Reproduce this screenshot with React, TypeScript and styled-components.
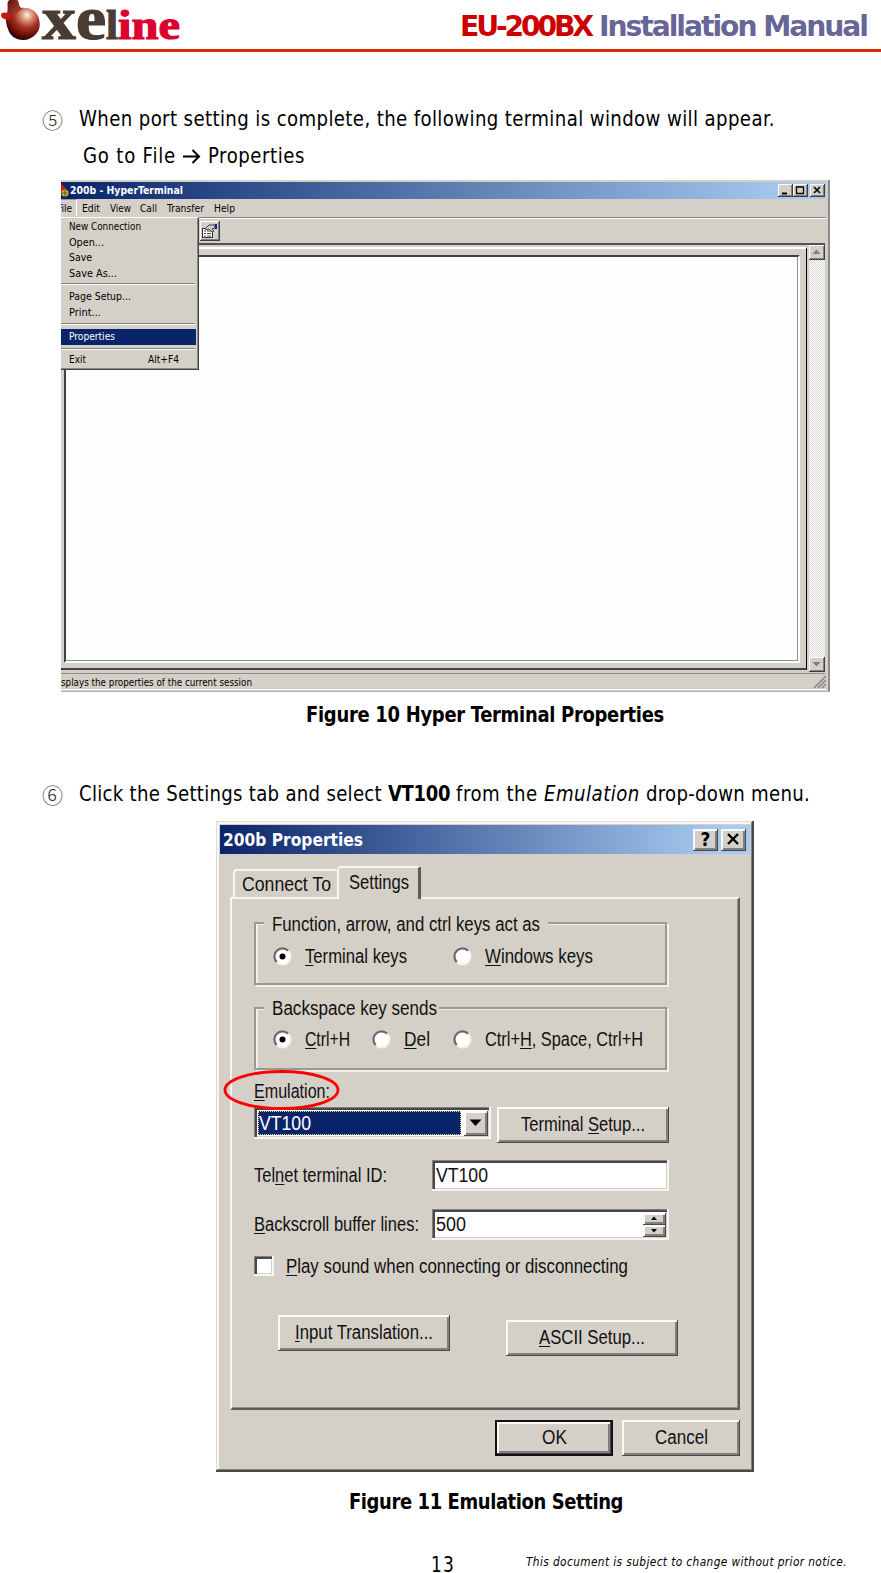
import { useLayoutEffect, useRef } from "react";
import type { ReactNode } from "react";
import styled, { createGlobalStyle, css } from "styled-components";

const face = "#d4d0c8";
const navy = "#0a246a";
const docFont = `"DejaVu Sans Condensed", "DejaVu Sans", sans-serif`;
const uiFont = `"Liberation Sans", Arial, sans-serif`;

const GlobalStyle = createGlobalStyle`
  * { box-sizing: border-box; }
  body { margin: 0; background: #fff; }
`;

/* ---------- text fitted to a line width ---------- */

const FitBox = styled.span<{ $w: number }>`
  display: inline-block;
  width: ${p => p.$w}px;
  white-space: nowrap;
  vertical-align: baseline;
`;

const FitInner = styled.span`
  display: inline-block;
  transform-origin: 0 50%;
`;

// With `squeeze` the glyphs get that width factor and tracking fills the rest,
// without it the glyphs alone are stretched to the width.
const Fit = ({ w, squeeze, children }: { w: number; squeeze?: number; children: ReactNode }) => {
  const ref = useRef<HTMLSpanElement>(null);

  useLayoutEffect(() => {
    const el = ref.current;
    if (!el) return;
    el.style.letterSpacing = "0px";
    el.style.transform = "none";
    const natural = el.getBoundingClientRect().width;
    const count = el.textContent?.length || 1;
    if (squeeze) {
      el.style.letterSpacing = `${(w / squeeze - natural) / count}px`;
      el.style.transform = `scaleX(${squeeze})`;
    } else {
      el.style.transform = `scaleX(${w / natural})`;
    }
  }, [w, squeeze]);

  return (
    <FitBox $w={w}>
      <FitInner ref={ref}>{children}</FitInner>
    </FitBox>
  );
};

/* ---------- document ---------- */

const Page = styled.div`
  width: 881px;
  height: 1573px;
  overflow: hidden;
  background: #fff;
  color: #000;
  font: 21px/37px ${docFont};
`;

const Header = styled.header`
  display: flex;
  justify-content: space-between;
  height: 52px;
  border-bottom: 3px solid #d92b04;
`;

const Logo = styled.div`
  display: flex;
  align-items: flex-start;
`;

const LogoText = styled.div`
  display: flex;
  align-items: baseline;
  height: 49px;
  font-family: "Liberation Serif", serif;
  font-weight: bold;
  line-height: 38px;
  color: #483c34;
`;

const LogoBig = styled.span`
  font-size: 61px;
  -webkit-text-stroke: 1.2px #483c34;
`;

const LogoSmall = styled.span<{ $red?: boolean }>`
  font-size: 43px;
  color: ${p => (p.$red ? "#dc0030" : "#483c34")};
  -webkit-text-stroke: 1.2px ${p => (p.$red ? "#dc0030" : "#483c34")};
`;

const Title = styled.h1`
  display: flex;
  gap: 8px;
  margin: 0;
  padding: 0 14px 0 0;
  font: bold 28.8px/52px "DejaVu Sans", sans-serif;
  color: #666699;
`;

const Product = styled.span`
  color: #cc0000;
`;

const Step = styled.div<{ $top: number }>`
  display: flex;
  height: 37px;
  margin: ${p => p.$top}px 0 0 42px;
`;

const StepNumber = styled.span`
  width: 37px;
  font: 300 21px/36px "Noto Sans CJK KR", sans-serif;
  color: #333;
`;

const SubStep = styled.div`
  display: flex;
  align-items: center;
  height: 37px;
  margin: 0 0 5px 83px;
`;

const Caption = styled.div<{ $top: number; $left: number }>`
  height: 37px;
  margin: ${p => p.$top}px 0 0 ${p => p.$left}px;
  font-weight: bold;
`;

const Footer = styled.footer`
  display: flex;
  align-items: flex-start;
  height: 27px;
  margin-top: 26px;
  padding-left: 431px;
`;

const Notice = styled.span`
  margin-left: 71px;
  font-size: 12px;
  line-height: 31px;
  font-style: italic;
`;

/* ---------- shared window parts ---------- */

const raised = css`
  background: ${face};
  box-shadow: inset -1px -1px #404040, inset 1px 1px #fff, inset -2px -2px #808080;
`;

const raisedThick = css`
  background: ${face};
  box-shadow: inset -1px -1px #484848, inset 2px 2px #fbfaf8, inset -3px -3px #808080;
`;

const sunken = css`
  background: #fff;
  box-shadow: inset -2px -2px #f6f5f2, inset 1px 1px #808080, inset 3px 3px #484848, inset -3px -3px ${face};
`;

/* ---------- HyperTerminal window ---------- */

const Terminal = styled.div`
  position: relative;
  width: 769px;
  height: 512px;
  margin-left: 61px;
  padding: 2px 2px 0 0;
  overflow: hidden;
  background: ${face};
  border-right: 2px solid #8c8c8c;
  border-bottom: 1px solid #b4b2ae;
  font: 11px/16px ${docFont};
`;

const TermTitle = styled.div`
  display: flex;
  align-items: center;
  height: 17px;
  padding: 0 1px 0 0;
  background: linear-gradient(90deg, ${navy} 0%, #a6caf0 96%);
  color: #fff;
  font-weight: bold;
`;

const TermName = styled.div`
  flex: 1;
  padding-left: 1px;
  line-height: 15px;
`;

const TermButton = styled.div<{ $gap?: boolean }>`
  ${raised}
  width: 15px;
  height: 13px;
  margin-left: ${p => (p.$gap ? 2 : 0)}px;

  svg { display: block; }
`;

const MenuBar = styled.div`
  display: flex;
  height: 19px;
  line-height: 19px;
  border-bottom: 1px solid #808080;
`;

const FileMenu = styled.div`
  display: flex;
  justify-content: flex-end;
  width: 16px;
  height: 17px;
  margin-right: 5px;
  padding-right: 4px;
  overflow: hidden;
  line-height: 18px;
  border-right: 1px solid #fff;
  border-top: 1px solid #9a9790;
`;

const MenuName = styled.div<{ $w: number }>`
  width: ${p => p.$w}px;
`;

const Toolbar = styled.div`
  height: 25px;
  padding: 2px 0 0 139px;
  border-top: 1px solid #fff;
`;

const ToolButton = styled.div`
  ${raised}
  width: 20px;
  height: 20px;
`;

const Work = styled.div`
  display: flex;
  height: 431px;
  border-top: 2px solid #55514f;
  border-bottom: 1px solid #8a8a86;
  margin-right: 1px;
`;

const Frame = styled.div`
  width: 746px;
  height: 423px;
  margin: 2px 2px 0 0;
  padding: 6px 6px 5px 3px;
  border-top: 2px solid #fff;
  border-right: 1px solid #000;
  border-bottom: 2px solid #404040;
`;

const Screen = styled.div`
  height: 100%;
  background: #fdfdfd;
  border: 2px solid #fff;
  border-top-color: #404040;
  border-left-color: #404040;
  box-shadow: inset -1px -1px #909090;
`;

const ScrollBar = styled.div`
  display: flex;
  flex-direction: column;
  justify-content: space-between;
  width: 16px;
  height: 427px;
  background: repeating-conic-gradient(#fff 0 25%, #dcd9d2 0 50%) 0 0 / 2px 2px;
`;

const ScrollButton = styled.div`
  ${raised}
  height: 15px;

  svg { display: block; }
`;

const Status = styled.div`
  display: flex;
  justify-content: space-between;
  height: 16px;
  line-height: 17px;
  border-bottom: 1px solid #fff;
`;

// The open File menu hangs over the toolbar and the screen.
const Popup = styled.div`
  position: absolute;
  left: 0;
  top: 37px;
  width: 138px;
  height: 153px;
  padding: 1px 2px 0 0;
  background: ${face};
  border-top: 1px solid #fff;
  border-right: 1px solid #404040;
  border-bottom: 1px solid #404040;
  box-shadow: inset -1px -1px #8c8a86;
`;

const PopupItem = styled.div<{ $active?: boolean }>`
  display: flex;
  height: ${p => (p.$active ? 16 : 15.5)}px;
  padding-left: 8px;
  line-height: 15px;
  background: ${p => (p.$active ? navy : "transparent")};
  color: ${p => (p.$active ? "#fff" : "#000")};
`;

const Shortcut = styled.span`
  margin-left: 62px;
`;

const PopupLine = styled.div<{ $above: number; $below: number }>`
  height: 2px;
  margin: ${p => p.$above}px 1px ${p => p.$below}px 0;
  background: #fff;
  border-top: 1px solid #808080;
`;

/* ---------- Properties dialog ---------- */

const Dialog = styled.div`
  width: 538px;
  height: 651px;
  margin: 8px 0 0 216px;
  padding: 4px;
  background: ${face};
  box-shadow: inset -2px -2px #484848, inset 1px 1px #dedbd4, inset -3px -3px #808080, inset 3px 3px #f8f7f4;
  font: 19.5px/24px ${uiFont};
  color: #111;

  u {
    text-decoration-thickness: 1.3px;
    text-underline-offset: 2px;
    text-decoration-skip-ink: none;
  }
`;

const DialogTitle = styled.div`
  display: flex;
  height: 29px;
  padding: 4px 4px 0 3px;
  background: linear-gradient(90deg, ${navy} 0%, #a6caf0 94%);
  color: #fff;
  font: bold 17px/22px ${docFont};
`;

const DialogName = styled.div`
  flex: 1;
`;

const DialogButton = styled.div`
  ${raisedThick}
  width: 25px;
  height: 22px;
  margin-left: 3px;
  color: #000;
  font: bold 19px/21px ${docFont};
  text-align: center;

  svg { display: block; }
`;

const Tabs = styled.div`
  display: flex;
  align-items: flex-end;
  height: 43px;
  padding-left: 13px;
`;

const Tab = styled.div<{ $active?: boolean }>`
  width: ${p => (p.$active ? 84 : 104)}px;
  height: ${p => (p.$active ? 33 : 28)}px;
  margin-bottom: ${p => (p.$active ? -2 : 0)}px;
  padding-left: ${p => (p.$active ? 10 : 7)}px;
  position: relative;
  background: ${face};
  border: 2px solid #f6f5f2;
  border-bottom: 0;
  border-right: ${p => (p.$active ? "3px solid #5c5c5a" : "0")};
  border-radius: 4px 3px 0 0;
  line-height: ${p => (p.$active ? 28 : 27)}px;
`;

const Panel = styled.div`
  width: 510px;
  height: 513px;
  margin-left: 10px;
  padding: 23px 0 0 22px;
  border: 2px solid #f6f5f2;
  border-right: 2px solid #5c5c5a;
  border-bottom: 2px solid #5c5c5a;
  box-shadow: inset -1px -1px #909090;
`;

const Group = styled.div<{ $shift: number }>`
  position: relative;
  display: flex;
  align-items: center;
  width: 413px;
  height: 63px;
  padding: ${p => p.$shift}px 0 0 17px;
  border: 2px solid #999895;
  box-shadow: inset 2px 1px #f2f0ec, 2px 2px #f2f0ec;

  & + & {
    margin-top: 22px;
  }
`;

// Sits on the group's top border and hides it.
const Legend = styled.div<{ $w: number; $top: number }>`
  position: absolute;
  left: 8px;
  top: ${p => p.$top}px;
  width: ${p => p.$w}px;
  padding-left: 8px;
  background: ${face};
`;

const Option = styled.label<{ $w?: number }>`
  display: flex;
  align-items: center;
  gap: 13px;
  width: ${p => (p.$w ? `${p.$w}px` : "auto")};
`;

const Row = styled.div<{ $top: number; $gap?: number; $indent?: number }>`
  display: flex;
  gap: ${p => p.$gap ?? 0}px;
  margin-top: ${p => p.$top}px;
  padding-left: ${p => p.$indent ?? 0}px;
`;

const EmulationLabel = styled.div`
  position: relative;
  height: 28px;
  margin-top: 9px;

  svg {
    position: absolute;
    left: -32px;
    top: -11px;
  }
`;

const Label = styled.div`
  width: 178px;
  line-height: 31px;
`;

const Field = styled.div<{ $h?: number }>`
  ${sunken}
  display: flex;
  justify-content: space-between;
  width: 237px;
  height: ${p => p.$h ?? 31}px;
  padding: 4px 3px 4px 4px;
  line-height: 23px;
`;

const Selected = styled.div`
  width: 203px;
  height: 24px;
  padding-left: 1px;
  line-height: 25px;
  background: ${navy};
  color: #fff;
  outline: 1px dotted #e8d28a;
  outline-offset: -1px;
`;

const DropButton = styled.div`
  ${raisedThick}
  width: 24px;
  height: 25px;

  svg { display: block; }
`;

const Spinner = styled.div`
  width: 23px;
`;

const SpinButton = styled.div`
  ${raisedThick}
  height: 12px;

  svg { display: block; }
`;

const CheckRow = styled.div`
  display: flex;
  height: 22px;
  margin-top: 16px;
  line-height: 21px;
`;

const CheckBox = styled.span`
  ${sunken}
  width: 20px;
  height: 20px;
  margin-right: 12px;
`;

const Button = styled.div<{ $w?: number; $down?: number; $default?: boolean }>`
  ${raisedThick}
  width: ${p => p.$w ?? 172}px;
  height: 36px;
  margin-top: ${p => p.$down ?? 0}px;
  line-height: 35px;
  text-align: center;
  ${p =>
    p.$default &&
    css`
      border: 2px solid #111;
      line-height: 31px;
    `}
`;

const DialogButtons = styled.div`
  display: flex;
  justify-content: flex-end;
  gap: 9px;
  margin: 10px 10px 0 0;
`;

/* ---------- drawings ---------- */

const LogoMark = () => (
  <svg width="42" height="42" viewBox="0 0 42 42">
    <defs>
      <radialGradient id="ball" gradientUnits="userSpaceOnUse" cx="27" cy="15" r="25">
        <stop offset="0" stopColor="#fdeee4" />
        <stop offset="0.22" stopColor="#dc9580" />
        <stop offset="0.5" stopColor="#a83424" />
        <stop offset="0.78" stopColor="#74100a" />
        <stop offset="1" stopColor="#260202" />
      </radialGradient>
      <linearGradient id="knob" x1="0" y1="0" x2="1" y2="1">
        <stop offset="0" stopColor="#5c0d0a" />
        <stop offset="1" stopColor="#b85444" />
      </linearGradient>
    </defs>
    <path
      d="M7 13c5-1 8-4 14-5 8-1 14 2 17 8 3 7 2 14-2 18s-8 6-13 6c-7 0-13-4-15-11C6 24 5 17 7 13z"
      fill="url(#ball)"
    />
    <path d="M7.500 3C8 0 11-1.500 14-1.500S18.500 1 19 4s2 4 5 5c-4 0-5 3-8 5l-9 2c0-3 1-7 .5-13z" fill="url(#knob)" />
    <path d="M1 15c0-3 4-3 7-2 3 0 4 2 3 5l-2 3c-3-2-8-2-8-6z" fill="#c4170f" />
  </svg>
);

const RightArrow = () => (
  <svg width="18" height="18" viewBox="0 0 18 18" fill="none" stroke="#000" strokeWidth="2">
    <path d="M0 8.500h16M9.500 2l6.500 6.500-6.500 6.500" />
  </svg>
);

const TermIcon = () => (
  <svg width="8" height="15" viewBox="0 0 8 15">
    <path d="M0 1l4 3 2 4-6 2z" fill="#d01818" />
    <circle cx="4" cy="10" r="3.500" fill="#c8b030" />
    <path d="M1 10h5M4 7v6" stroke="#6a5a10" />
  </svg>
);

const PropertiesIcon = () => (
  <svg width="20" height="20" viewBox="0 0 20 20">
    <rect x="2.500" y="7.500" width="10" height="9" fill="#fff" stroke="#333" />
    <path d="M4 10h2M7 10h4M4 12.500h2M7 12.500h4M4 15h2M7 15h4" stroke="#444" />
    <path d="M5 8l4-4h6v3l-3 1 2 2-2 1-3-3-2 1z" fill="#cfccc4" stroke="#333" strokeWidth=".9" />
    <rect x="15" y="3" width="2" height="5" fill="#1a1a9c" />
  </svg>
);

const Grip = () => (
  <svg width="13" height="14" viewBox="0 0 13 14" stroke="#85837e" strokeWidth="1.500">
    <path d="M1 14L13 2M5 14l8-8M9 14l4-4" />
  </svg>
);

const EditArrow = ({ up, box }: { up?: boolean; box: [number, number, number] }) => {
  const [w, h, s] = box;
  const cx = w / 2 - 0.5;
  const cy = h / 2 - 0.5;
  const dir = up ? -1 : 1;
  return (
    <svg width={w} height={h}>
      <path
        d={`M${cx - s} ${cy - (dir * s) / 2}h${s * 2}L${cx} ${cy + (dir * s) / 2 + dir * 0.5}z`}
        fill={w === 16 ? "#808080" : "#000"}
      />
    </svg>
  );
};

const items = [
  { name: "New Connection", w: 72 },
  { name: "Open...", w: 35 },
  { name: "Save", w: 23 },
  { name: "Save As...", w: 48 },
];

const HyperTerminal = () => (
  <Terminal>
    <TermTitle>
      <TermIcon />
      <TermName><Fit w={113}>200b - HyperTerminal</Fit></TermName>
      <TermButton><svg width="15" height="13"><path d="M4 9.500h5" stroke="#000" strokeWidth="2" /></svg></TermButton>
      <TermButton><svg width="15" height="13"><path d="M3 3h8M3.500 3v7M10.500 3v7M3 9.500h8" stroke="#000" strokeWidth="1.300" /></svg></TermButton>
      <TermButton $gap><svg width="15" height="13"><path d="M4 3l6 6M10 3l-6 6" stroke="#000" strokeWidth="1.600" /></svg></TermButton>
    </TermTitle>
    <MenuBar>
      <FileMenu><Fit w={15}>File</Fit></FileMenu>
      <MenuName $w={28}><Fit w={18}>Edit</Fit></MenuName>
      <MenuName $w={30}><Fit w={21}>View</Fit></MenuName>
      <MenuName $w={27}><Fit w={17}>Call</Fit></MenuName>
      <MenuName $w={47}><Fit w={37}>Transfer</Fit></MenuName>
      <MenuName $w={40}><Fit w={21}>Help</Fit></MenuName>
    </MenuBar>
    <Toolbar>
      <ToolButton><PropertiesIcon /></ToolButton>
    </Toolbar>
    <Work>
      <Frame><Screen /></Frame>
      <ScrollBar>
        <ScrollButton><EditArrow up box={[16, 15, 4]} /></ScrollButton>
        <ScrollButton><EditArrow box={[16, 15, 4]} /></ScrollButton>
      </ScrollBar>
    </Work>
    <Status>
      <Fit w={191}>splays the properties of the current session</Fit>
      <Grip />
    </Status>
    <Popup>
      {items.map(item => (
        <PopupItem key={item.name}><Fit w={item.w}>{item.name}</Fit></PopupItem>
      ))}
      <PopupLine $above={2} $below={4} />
      <PopupItem><Fit w={62}>Page Setup...</Fit></PopupItem>
      <PopupItem><Fit w={32}>Print...</Fit></PopupItem>
      <PopupLine $above={3} $below={4} />
      <PopupItem $active><Fit w={46}>Properties</Fit></PopupItem>
      <PopupLine $above={3} $below={2} />
      <PopupItem>
        <Fit w={17}>Exit</Fit>
        <Shortcut><Fit w={31}>Alt+F4</Fit></Shortcut>
      </PopupItem>
    </Popup>
  </Terminal>
);

const Radio = ({ on }: { on?: boolean }) => (
  <svg width="19" height="19" viewBox="0 0 19 19">
    <circle cx="9.500" cy="9.500" r="7.500" fill="#fff" />
    <path d="M3.800 15.200A8 8 0 0 1 15.200 3.800" fill="none" stroke="#6a6a68" strokeWidth="2.200" />
    <path d="M3.800 15.200A8 8 0 0 0 15.200 3.800" fill="none" stroke="#f4f2ee" strokeWidth="2" />
    {on && <circle cx="9.500" cy="9.500" r="3" fill="#000" />}
  </svg>
);

const PropertiesDialog = () => (
  <Dialog>
    <DialogTitle>
      <DialogName><Fit w={140}>200b Properties</Fit></DialogName>
      <DialogButton>?</DialogButton>
      <DialogButton>
        <svg width="25" height="22"><path d="M7 5l10 10M17 5L7 15" stroke="#000" strokeWidth="2.400" /></svg>
      </DialogButton>
    </DialogTitle>
    <Tabs>
      <Tab><Fit w={89}>Connect To</Fit></Tab>
      <Tab $active><Fit w={60}>Settings</Fit></Tab>
    </Tabs>
    <Panel>
      <Group $shift={5}>
        <Legend $w={284} $top={-12}><Fit w={268}>Function, arrow, and ctrl keys act as</Fit></Legend>
        <Option $w={180}><Radio on /><Fit w={102}><u>T</u>erminal keys</Fit></Option>
        <Option><Radio /><Fit w={108}><u>W</u>indows keys</Fit></Option>
      </Group>
      <Group $shift={1}>
        <Legend $w={175} $top={-13}><Fit w={165}>Backspace key sends</Fit></Legend>
        <Option $w={99}><Radio on /><Fit w={45}><u>C</u>trl+H</Fit></Option>
        <Option $w={81}><Radio /><Fit w={26}><u>D</u>el</Fit></Option>
        <Option><Radio /><Fit w={158}>Ctrl+<u>H</u>, Space, Ctrl+H</Fit></Option>
      </Group>
      <EmulationLabel>
        <Fit w={76}><u>E</u>mulation:</Fit>
        <svg width="120" height="44">
          <ellipse cx="59.500" cy="22" rx="56.500" ry="18.500" fill="none" stroke="#f00" strokeWidth="2.800" />
        </svg>
      </EmulationLabel>
      <Row $top={0} $gap={6}>
        <Field $h={32}>
          <Selected><Fit w={52}>VT100</Fit></Selected>
          <DropButton><EditArrow box={[24, 24, 6]} /></DropButton>
        </Field>
        <Button><Fit w={124}>Terminal <u>S</u>etup...</Fit></Button>
      </Row>
      <Row $top={17}>
        <Label><Fit w={133}>Tel<u>n</u>et terminal ID:</Fit></Label>
        <Field><Fit w={52}>VT100</Fit></Field>
      </Row>
      <Row $top={18}>
        <Label><Fit w={165}><u>B</u>ackscroll buffer lines:</Fit></Label>
        <Field>
          <Fit w={30}>500</Fit>
          <Spinner>
            <SpinButton><EditArrow up box={[23, 12, 3]} /></SpinButton>
            <SpinButton><EditArrow box={[23, 12, 3]} /></SpinButton>
          </Spinner>
        </Field>
      </Row>
      <CheckRow>
        <CheckBox />
        <Fit w={342}><u>P</u>lay sound when connecting or disconnecting</Fit>
      </CheckRow>
      <Row $top={37} $gap={56} $indent={24}>
        <Button><Fit w={138}><u>I</u>nput Translation...</Fit></Button>
        <Button $down={5}><Fit w={106}><u>A</u>SCII Setup...</Fit></Button>
      </Row>
    </Panel>
    <DialogButtons>
      <Button $w={118} $default><Fit w={25}>OK</Fit></Button>
      <Button $w={118}><Fit w={53}>Cancel</Fit></Button>
    </DialogButtons>
  </Dialog>
);

const App = () => (
  <>
    <GlobalStyle />
    <Page>
      <Header>
        <Logo>
          <LogoMark />
          <LogoText>
            <LogoBig><Fit w={64}>xe</Fit></LogoBig>
            <LogoSmall><Fit w={12}>l</Fit></LogoSmall>
            <LogoSmall $red><Fit w={62}>ine</Fit></LogoSmall>
          </LogoText>
        </Logo>
        <Title>
          <Product><Fit w={131} squeeze={0.98}>EU-200BX</Fit></Product>
          <Fit w={268} squeeze={0.98}>Installation Manual</Fit>
        </Title>
      </Header>

      <Step $top={49}>
        <StepNumber>⑤</StepNumber>
        <Fit w={696} squeeze={0.96}>When port setting is complete, the following terminal window will appear.</Fit>
      </Step>
      <SubStep>
        <Fit w={93} squeeze={0.96}>Go to File</Fit>
        <Fit w={7}> </Fit>
        <RightArrow />
        <Fit w={7}> </Fit>
        <Fit w={97} squeeze={0.96}>Properties</Fit>
      </SubStep>
      <HyperTerminal />
      <Caption $top={5} $left={306}>
        <Fit w={358} squeeze={0.95}>Figure 10 Hyper Terminal Properties</Fit>
      </Caption>

      <Step $top={42}>
        <StepNumber>⑥</StepNumber>
        <Fit w={309} squeeze={0.96}>Click the Settings tab and select&nbsp;</Fit>
        <b><Fit w={68} squeeze={0.95}>VT100&nbsp;</Fit></b>
        <Fit w={88} squeeze={0.96}>from the&nbsp;</Fit>
        <i><Fit w={102} squeeze={0.96}>Emulation&nbsp;</Fit></i>
        <Fit w={164} squeeze={0.96}>drop-down menu.</Fit>
      </Step>
      <PropertiesDialog />
      <Caption $top={12} $left={349}>
        <Fit w={274} squeeze={0.95}>Figure 11 Emulation Setting</Fit>
      </Caption>

      <Footer>
        <Fit w={24} squeeze={0.9}>13</Fit>
        <Notice><Fit w={321} squeeze={0.98}>This document is subject to change without prior notice.</Fit></Notice>
      </Footer>
    </Page>
  </>
);

export default App;
